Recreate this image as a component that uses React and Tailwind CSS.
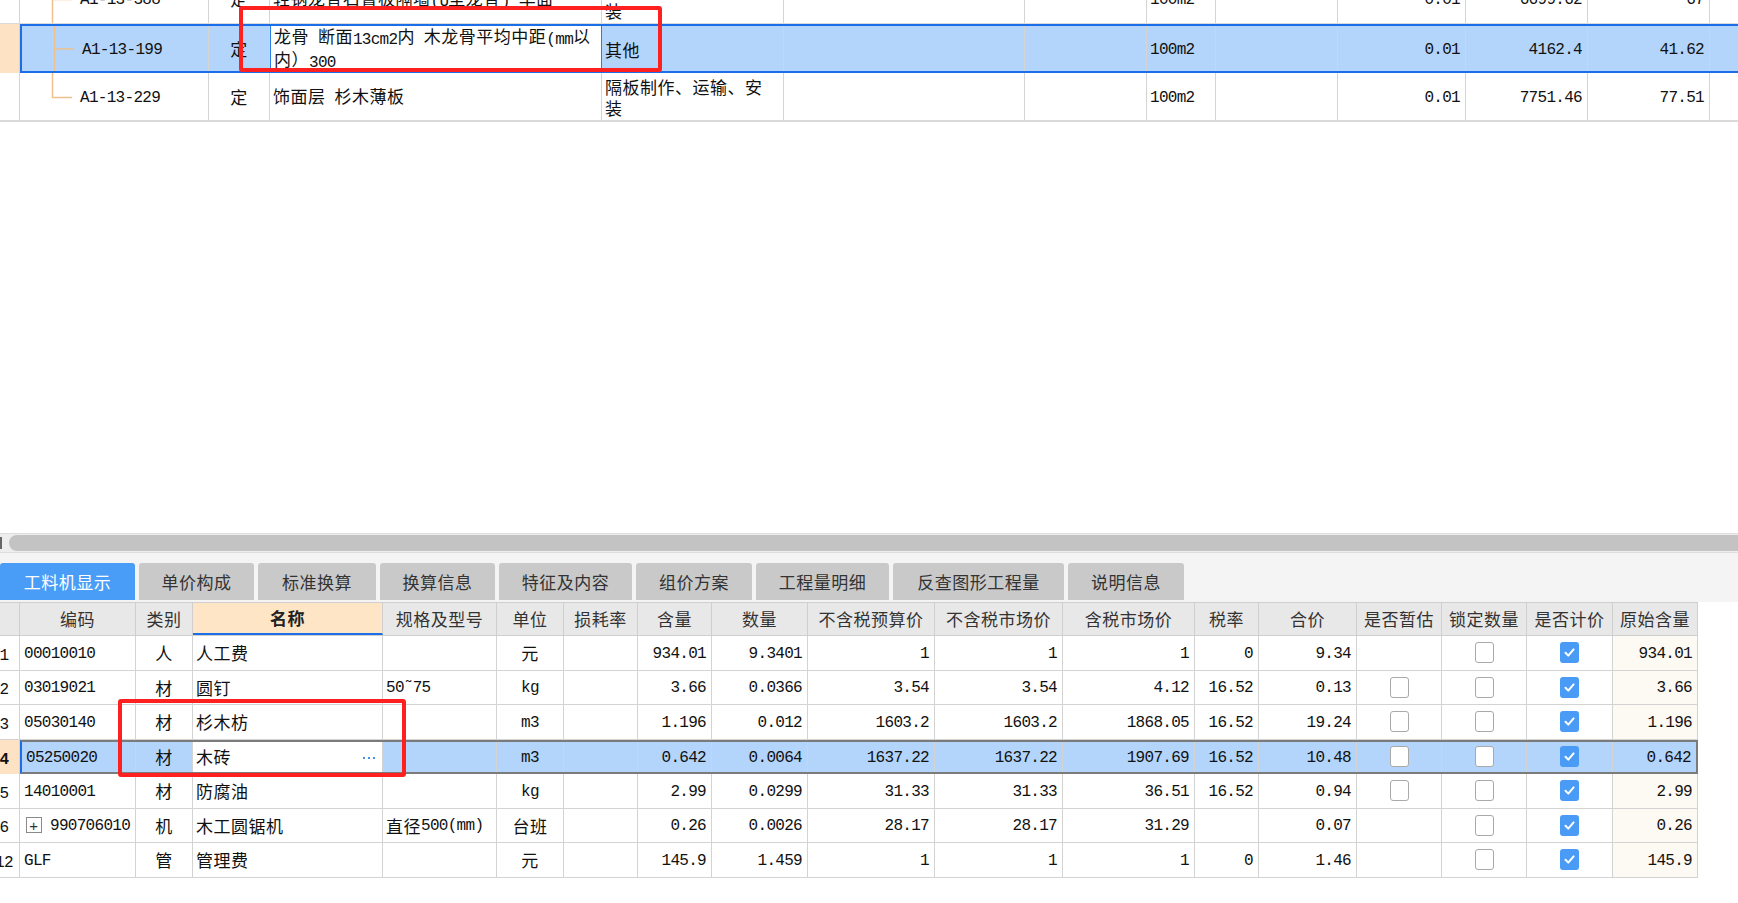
import React from "react";

const CN = "font-['Noto_Sans_CJK_SC',sans-serif] text-[17px] tracking-[0.5px]";
const M = "font-['Liberation_Mono',monospace] text-[16px] tracking-[-0.7px] relative top-[1px]";

const Mn = ({ children, className = "" }) => (
  <span className={`${M} ${className}`}>{children}</span>
);

const isAscii = (s) => /^[\x00-\x7F]+$/.test(s);
const Txt = ({ v }) => (typeof v === "string" && isAscii(v) ? <Mn>{v}</Mn> : <>{v}</>);

function TreeSvg({ last, h }) {
  const c = h / 2;
  return (
    <svg width="60" height={h} className="shrink-0">
      <line x1="32.5" y1="0" x2="32.5" y2={last ? c + 1 : h} stroke="#efc08c" strokeWidth="1.5" />
      <line x1="32" y1={c + 0.5} x2="52" y2={c + 0.5} stroke="#efc08c" strokeWidth="1.5" />
    </svg>
  );
}

const topRows = [
  {
    code: "A1-13-388",
    type: "定",
    name: (
      <>
        轻钢龙骨石膏板隔墙<Mn>(U</Mn>型龙骨<Mn>) </Mn>单面
      </>
    ),
    desc: (
      <>
        隔板制作、运输、安
        <br />装
      </>
    ),
    unit: "100m2",
    qty: "0.01",
    price: "6699.62",
    total: "67",
  },
  {
    code: "A1-13-199",
    type: "定",
    sel: true,
    name: (
      <>
        龙骨<Mn> </Mn>断面<Mn>13cm2</Mn>内<Mn> </Mn>木龙骨平均中距<Mn>(mm</Mn>以
        <br />
        内）<Mn>300</Mn>
      </>
    ),
    desc: "其他",
    unit: "100m2",
    qty: "0.01",
    price: "4162.4",
    total: "41.62",
  },
  {
    code: "A1-13-229",
    type: "定",
    last: true,
    name: (
      <>
        饰面层<Mn> </Mn>杉木薄板
      </>
    ),
    desc: (
      <>
        隔板制作、运输、安
        <br />装
      </>
    ),
    unit: "100m2",
    qty: "0.01",
    price: "7751.46",
    total: "77.51",
  },
];

const TB = "shrink-0 border-r border-[#d4d4d4] flex items-center";

function TopRow({ r }) {
  const sel = r.sel;
  return (
    <div className={`flex h-[49px] ${sel ? "" : "border-b border-[#dadada]"} ${r.last ? "border-b-2" : ""}`}>
      <div className={`w-[20px] ${TB} ${sel ? "bg-[#fde3c3]" : "bg-white"}`} />
      <div className={`flex flex-1 ${sel ? "border-y-2 border-l-2 border-[#1c6ee8] bg-[#b4d5fb]" : ""}`}>
        <div className={`${sel ? "w-[187px]" : "w-[189px]"} ${TB}`}>
          <TreeSvg last={r.last} h={sel ? 45 : 48} />
          <Mn>{r.code}</Mn>
        </div>
        <div className={`w-[61px] ${TB} justify-center`}>{r.type}</div>
        <div
          className={`w-[332px] ${TB} px-[3px] leading-[20px] ${
            sel ? "bg-white border-l border-l-[#2a7be8] border-r-[#2a7be8]" : ""
          }`}
        >
          <div className="pt-[1px]">{r.name}</div>
        </div>
        <div className={`w-[182px] ${TB} px-[3px] leading-[21px]`}>
          <div className="pt-[1px]">{r.desc}</div>
        </div>
        <div className={`w-[241px] ${TB}`} />
        <div className={`w-[122px] ${TB}`} />
        <div className={`w-[69px] ${TB} px-[3px]`}>
          <Mn>{r.unit}</Mn>
        </div>
        <div className={`w-[122px] ${TB}`} />
        <div className={`w-[128px] ${TB} justify-end pr-[5px]`}>
          <Mn>{r.qty}</Mn>
        </div>
        <div className={`w-[122px] ${TB} justify-end pr-[5px]`}>
          <Mn>{r.price}</Mn>
        </div>
        <div className={`w-[122px] ${TB} justify-end pr-[5px]`}>
          <Mn>{r.total}</Mn>
        </div>
        <div className="w-[28px] shrink-0" />
      </div>
    </div>
  );
}

const tabs = [
  ["工料机显示", "w-[135px]"],
  ["单价构成", "w-[115px]"],
  ["标准换算", "w-[118px]"],
  ["换算信息", "w-[115px]"],
  ["特征及内容", "w-[133px]"],
  ["组价方案", "w-[116px]"],
  ["工程量明细", "w-[133px]"],
  ["反查图形工程量", "w-[171px]"],
  ["说明信息", "w-[116px]"],
];

const BW = [
  "w-[20px]",
  "w-[116px]",
  "w-[57px]",
  "w-[190px]",
  "w-[114px]",
  "w-[67px]",
  "w-[74px]",
  "w-[74px]",
  "w-[96px]",
  "w-[127px]",
  "w-[128px]",
  "w-[132px]",
  "w-[64px]",
  "w-[98px]",
  "w-[85px]",
  "w-[85px]",
  "w-[86px]",
  "w-[85px]",
];

const headers = [
  "",
  "编码",
  "类别",
  "名称",
  "规格及型号",
  "单位",
  "损耗率",
  "含量",
  "数量",
  "不含税预算价",
  "不含税市场价",
  "含税市场价",
  "税率",
  "合价",
  "是否暂估",
  "锁定数量",
  "是否计价",
  "原始含量",
];

const rows = [
  { n: "1", code: "00010010", type: "人", name: "人工费", spec: "", unit: "元", v: ["934.01", "9.3401", "1", "1", "1", "0", "9.34"], est: null, orig: "934.01" },
  { n: "2", code: "03019021", type: "材", name: "圆钉", spec: <Mn>50˜75</Mn>, unit: "kg", v: ["3.66", "0.0366", "3.54", "3.54", "4.12", "16.52", "0.13"], est: false, orig: "3.66" },
  { n: "3", code: "05030140", type: "材", name: "杉木枋", spec: "", unit: "m3", v: ["1.196", "0.012", "1603.2", "1603.2", "1868.05", "16.52", "19.24"], est: false, orig: "1.196" },
  { n: "4", code: "05250020", type: "材", name: "木砖", spec: "", unit: "m3", v: ["0.642", "0.0064", "1637.22", "1637.22", "1907.69", "16.52", "10.48"], est: false, orig: "0.642", sel: true },
  { n: "5", code: "14010001", type: "材", name: "防腐油", spec: "", unit: "kg", v: ["2.99", "0.0299", "31.33", "31.33", "36.51", "16.52", "0.94"], est: false, orig: "2.99" },
  { n: "6", code: "990706010", plus: true, type: "机", name: "木工圆锯机", spec: <>直径<Mn>500(mm)</Mn></>, unit: "台班", v: ["0.26", "0.0026", "28.17", "28.17", "31.29", "", "0.07"], est: null, orig: "0.26" },
  { n: "12", code: "GLF", type: "管", name: "管理费", spec: "", unit: "元", v: ["145.9", "1.459", "1", "1", "1", "0", "1.46"], est: null, orig: "145.9" },
];

function Check({ on }) {
  if (on)
    return (
      <div className="w-[19px] h-[21px] rounded-[3px] bg-[#4a9bf5] flex items-center justify-center">
        <svg width="13" height="13" viewBox="0 0 13 13">
          <path d="M2.5 6.8 L5.3 9.6 L10.6 3.4" fill="none" stroke="white" strokeWidth="2" strokeLinecap="round" strokeLinejoin="round" />
        </svg>
      </div>
    );
  return <div className="w-[19px] h-[21px] rounded-[3px] border border-[#a9a9a9] bg-white" />;
}

const BC = "shrink-0 border-r border-[#d3d3d3] flex items-center h-full";

function BottomRow({ r }) {
  const sel = r.sel;
  const cells = (
    <>
      <div className={`${sel ? "w-[114px]" : "w-[116px]"} ${BC} pl-[4px]`}>
        {r.plus && (
          <div className="w-[16px] h-[16px] border border-[#8a8a8a] ml-[2px] mr-[8px] flex items-center justify-center text-[#333] text-[15px] leading-none">
            <span className="font-['Liberation_Sans',sans-serif]">+</span>
          </div>
        )}
        <Mn>{r.code}</Mn>
      </div>
      <div className={`w-[57px] ${BC} justify-center`}>{r.type}</div>
      <div className={`w-[190px] ${BC} pl-[3px] pr-[6px] justify-between ${sel ? "bg-white" : ""}`}>
        <span>{r.name}</span>
        {sel && (
          <span className="flex gap-[3px] items-center mr-[1px] mt-[2px]">
            <span className="w-[2px] h-[2px] bg-[#4a8fe0]" />
            <span className="w-[2px] h-[2px] bg-[#4a8fe0]" />
            <span className="w-[2px] h-[2px] bg-[#4a8fe0]" />
          </span>
        )}
      </div>
      <div className={`w-[114px] ${BC} pl-[3px]`}>{r.spec}</div>
      <div className={`w-[67px] ${BC} justify-center`}>
        <Txt v={r.unit} />
      </div>
      <div className={`w-[74px] ${BC}`} />
      <div className={`w-[74px] ${BC} justify-end pr-[5px]`}>
        <Mn>{r.v[0]}</Mn>
      </div>
      <div className={`w-[96px] ${BC} justify-end pr-[5px]`}>
        <Mn>{r.v[1]}</Mn>
      </div>
      <div className={`w-[127px] ${BC} justify-end pr-[5px]`}>
        <Mn>{r.v[2]}</Mn>
      </div>
      <div className={`w-[128px] ${BC} justify-end pr-[5px]`}>
        <Mn>{r.v[3]}</Mn>
      </div>
      <div className={`w-[132px] ${BC} justify-end pr-[5px]`}>
        <Mn>{r.v[4]}</Mn>
      </div>
      <div className={`w-[64px] ${BC} justify-end pr-[5px]`}>
        <Mn>{r.v[5]}</Mn>
      </div>
      <div className={`w-[98px] ${BC} justify-end pr-[5px]`}>
        <Mn>{r.v[6]}</Mn>
      </div>
      <div className={`w-[85px] ${BC} justify-center`}>{r.est !== null && <Check on={false} />}</div>
      <div className={`w-[85px] ${BC} justify-center`}>
        <Check on={false} />
      </div>
      <div className={`w-[86px] ${BC} justify-center`}>
        <Check on={true} />
      </div>
      <div className={`${sel ? "w-[83px] border-r-0" : "w-[85px] bg-[#fdf9f3]"} ${BC} justify-end pr-[5px]`}>
        <Mn>{r.orig}</Mn>
      </div>
    </>
  );
  return (
    <div className={`flex h-[34.5px] ${sel ? "" : "border-b border-[#d3d3d3]"}`}>
      <div className={`w-[20px] ${BC} overflow-hidden ${sel ? "bg-[#fde3c3]" : "bg-white"}`}>
        <div className="w-[32px] -ml-[12px] shrink-0 text-center">
          <Mn className={sel ? "font-bold" : ""}>{r.n}</Mn>
        </div>
      </div>
      {sel ? (
        <div className="flex h-full border-y-2 border-r-2 border-l-2 border-[#7b7b7b] border-l-[#1c6ee8] bg-[#b4d5fb]">
          {cells}
        </div>
      ) : (
        cells
      )}
    </div>
  );
}

export default function App() {
  return (
    <div className={`relative w-[1738px] h-[903px] overflow-hidden bg-white text-[#111] ${CN}`}>
      {/* Top table */}
      <div className="h-[533px] overflow-hidden">
        <div className="-mt-[25px]">
          {topRows.map((r, i) => (
            <TopRow key={i} r={r} />
          ))}
        </div>
      </div>

      {/* horizontal scrollbar */}
      <div className="h-[20px] bg-[#ededed] border-y border-[#dedede] flex items-center">
        <div className="w-[2px] h-[12px] bg-[#666] shrink-0" />
        <div className="ml-[7px] h-[16px] flex-1 -mr-[20px] rounded-full bg-[#c3c3c3]" />
      </div>

      {/* tabs */}
      <div className="h-[49px] bg-[#f4f4f4] flex items-start gap-[4px] pt-[10px]">
        {tabs.map(([t, w], i) => (
          <div
            key={t}
            className={`${w} h-[37px] shrink-0 rounded-t-[3px] flex items-center justify-center ${
              i === 0 ? "bg-[#4a9df6] text-white" : "bg-[#c9c9c9] text-[#333]"
            }`}
          >
            {t}
          </div>
        ))}
      </div>

      {/* header */}
      <div className="flex h-[34px] border-y border-[#cfcfcf] bg-[#e8e8e8] text-[#333] w-[1698px]">
        {headers.map((h, i) => (
          <div
            key={i}
            className={`${BW[i]} shrink-0 h-full border-r border-[#cfcfcf] flex items-center justify-center ${
              i === 3 ? "bg-[#fde5c6] font-bold border-b-2 border-b-[#1c6ee8] text-[#222]" : ""
            }`}
          >
            {h}
          </div>
        ))}
      </div>

      {/* rows */}
      <div className="w-[1698px]">
        {rows.map((r, i) => (
          <BottomRow key={i} r={r} />
        ))}
      </div>

      {/* red annotation boxes */}
      <div className="absolute left-[239px] top-[6px] w-[423px] h-[66px] border-[4px] border-[#ff2020] rounded-[3px]" />
      <div className="absolute left-[118px] top-[699px] w-[288px] h-[78px] border-[4px] border-[#ff2020] rounded-[3px]" />
    </div>
  );
}
